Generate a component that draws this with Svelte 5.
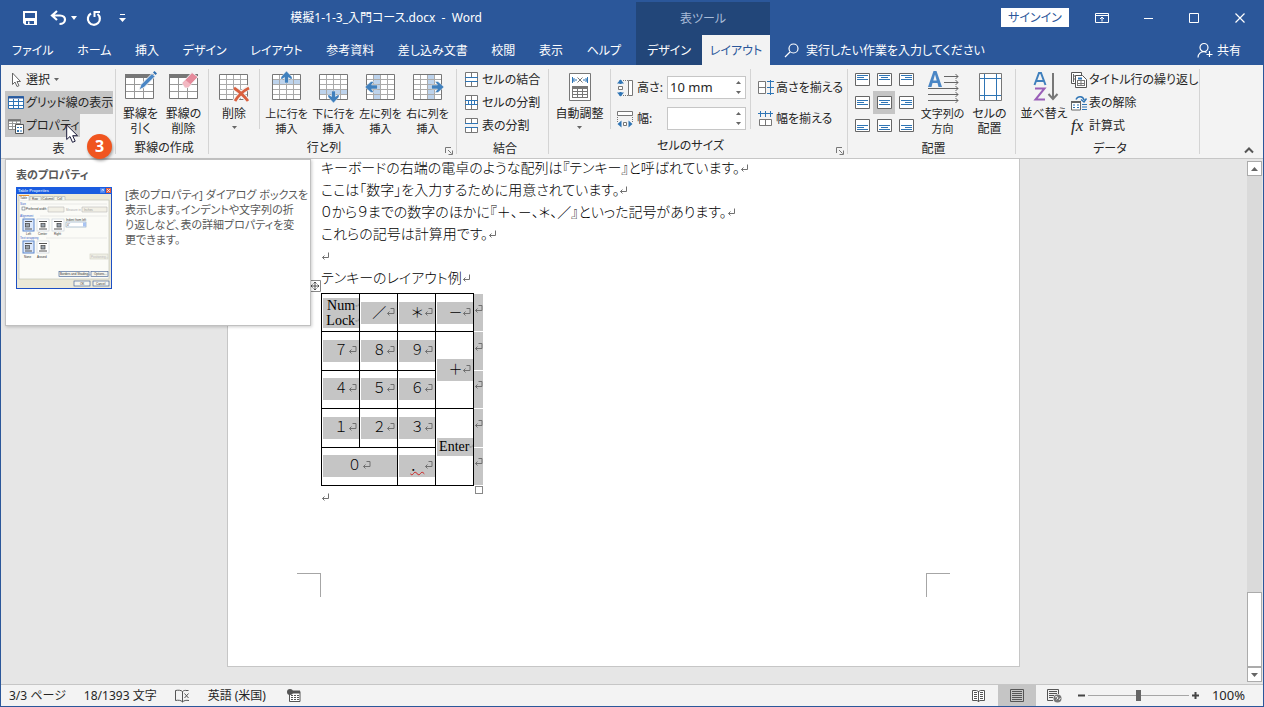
<script>
  const tabs = ['ファイル', 'ホーム', '挿入', 'デザイン', 'レイアウト', '参考資料', '差し込み文書', '校閲', '表示', 'ヘルプ'];
  const inserts = [
    { label: ['上に行を', '挿入'], dir: 'up' },
    { label: ['下に行を', '挿入'], dir: 'down' },
    { label: ['左に列を', '挿入'], dir: 'left' },
    { label: ['右に列を', '挿入'], dir: 'right' }
  ];
  const lines = [
    'キーボードの右端の電卓のような配列は『テンキー』と呼ばれています。',
    'ここは「数字」を入力するために用意されています。',
    '０から９までの数字のほかに『＋、－、＊、／』といった記号があります。',
    'これらの記号は計算用です。',
    '',
    'テンキーのレイアウト例'
  ];
  const aligns = ['左上', '中央上', '右上', '左中央', '中央', '右中央', '左下', '中央下', '右下'];
  const rows = [
    [{ t: ['Num', 'Lock'], latin: true }, { t: ['／'] }, { t: ['＊'] }, { t: ['－'] }],
    [{ t: ['７'] }, { t: ['８'] }, { t: ['９'] }, { t: ['＋'], rs: 2 }],
    [{ t: ['４'] }, { t: ['５'] }, { t: ['６'] }],
    [{ t: ['１'] }, { t: ['２'] }, { t: ['３'] }, { t: ['Enter'], rs: 2, latin: true }],
    [{ t: ['０'], cs: 2 }, { t: ['．'], err: true }]
  ];
  let rowHeight = $state('10 mm');
  let colWidth = $state('');
  let zoom = $state(50);
</script>

{#snippet mark()}
  <svg class="mark" width="9" height="9" viewBox="0 0 9 9" aria-hidden="true"><path d="M7.500 .5V5.500H1.500M3.500 3.500L1.500 5.500L3.500 7.500" /></svg>
{/snippet}

{#snippet cellmark()}
  <svg class="mark" width="9" height="9" viewBox="0 0 9 9" aria-hidden="true"><path d="M4.500 .5H8V5.500H1.500M3.500 3.500L1.500 5.500L3.500 7.500" /></svg>
{/snippet}

{#snippet launcher(name)}
  <button class="launcher" aria-label={name}>
    <svg width="8" height="8" viewBox="0 0 8 8"><path d="M.5 6V.5H6M3 3l3.500 3.500M7.500 3.500v4h-4" fill="none" stroke="#777" /></svg>
  </button>
{/snippet}

{#snippet down()}
  <svg class="down" width="5" height="3" viewBox="0 0 5 3"><path d="M0 0H5L2.500 3Z" fill="#666" /></svg>
{/snippet}

{#snippet grid28()}
  <path d="M1.500 4.500H29.500V29.500H1.500Z" fill="#fff" stroke="#777" />
{/snippet}

{#snippet gridlines()}
  <path d="M8.500 5V29M15.500 5V29M22.500 5V29M2 9.500H29M2 14.500H29M2 19.500H29M2 24.500H29" fill="none" stroke="#aaa" />
{/snippet}

<div class="window">
  <header>
    <div class="titlebar">
      <div class="quick">
        <button aria-label="上書き保存">
          <svg width="16" height="16" viewBox="0 0 16 16"><path d="M1 1H15V15H3L1 13ZM3 3V8H13V3ZM4 11V14H6V11.500H7.500V14H12V11Z" fill="#fff" fill-rule="evenodd" /></svg>
        </button>
        <button class="undo" aria-label="元に戻す">
          <svg width="17" height="16" viewBox="0 0 17 16"><path d="M7 1L2 5.500L7 10M2.500 5.500H10C17 5.500 16.500 14 9.500 14" fill="none" stroke="#fff" stroke-width="2.200" /></svg>
          <svg width="6" height="4" viewBox="0 0 6 4"><path d="M0 0H6L3 4Z" fill="#fff" /></svg>
        </button>
        <button aria-label="繰り返し">
          <svg width="16" height="16" viewBox="0 0 16 16"><path d="M5 3.500A6 6 0 1 0 11.500 4" fill="none" stroke="#fff" stroke-width="2.200" /><path d="M8.500 7V2H14" fill="none" stroke="#fff" stroke-width="2" /></svg>
        </button>
        <button aria-label="クイック アクセス ツール バーのユーザー設定">
          <svg width="7" height="8" viewBox="0 0 7 8"><path d="M1 0H6V1H1ZM0 4H7L3.500 8Z" fill="#fff" /></svg>
        </button>
      </div>
      <h1>模擬1-1-3_入門コース.docx&nbsp; -&nbsp; Word</h1>
    </div>
    <div class="context">表ツール</div>
    <div class="controls">
      <button class="signin">サインイン</button>
      <button class="win" aria-label="リボンの表示オプション"><svg width="14" height="12" viewBox="0 0 14 12"><path d="M.5 1.500H13.500V10.500H.5ZM.5 3.500H13.500M7 9.500V5M5 7L7 5L9 7" fill="none" stroke="#fff" /></svg></button>
      <button class="win" aria-label="最小化"><svg width="10" height="10" viewBox="0 0 10 10"><path d="M1 5.500H10" stroke="#fff" /></svg></button>
      <button class="win" aria-label="最大化"><svg width="10" height="10" viewBox="0 0 10 10"><path d="M.5 .5H9.500V9.500H.5Z" fill="none" stroke="#fff" /></svg></button>
      <button class="win" aria-label="閉じる"><svg width="10" height="10" viewBox="0 0 10 10"><path d="M.5 .5L9.500 9.500M9.500 .5L.5 9.500" stroke="#fff" stroke-width="1.200" /></svg></button>
    </div>
    <nav class="tabs">
      {#each tabs as tab}<button>{tab}</button>{/each}
    </nav>
    <nav class="tabs ctx">
      <button>デザイン</button>
      <button class="active">レイアウト</button>
    </nav>
    <div class="tell">
      <label for="tell" aria-label="操作アシスト"><svg width="15" height="15" viewBox="0 0 15 15"><path d="M6 9L1 14M9.500 1A4.500 4.500 0 1 1 9.500 10A4.500 4.500 0 1 1 9.500 1Z" fill="none" stroke="#fff" stroke-width="1.200" /></svg></label>
      <input id="tell" type="text" placeholder="実行したい作業を入力してください" />
      <button class="share"><svg width="16" height="16" viewBox="0 0 16 16"><path d="M7 1.500A4 4 0 1 1 7 9.500A4 4 0 1 1 7 1.500ZM1 15.500C1 11.500 4 9.700 7 9.700C8 9.700 9 10 9.500 10.500M12.500 9V15M9.500 12.500H15.500" fill="none" stroke="#fff" stroke-width="1.200" /></svg>共有</button>
    </div>
  </header>

  <section class="ribbon">
    <div class="group g1">
      <div class="body">
        <div class="stack">
          <button class="small"><svg width="16" height="16" viewBox="0 0 16 16"><path d="M4.500 1V12.500L7 10L9 14.500L11 13.700L9 9.500H12.500Z" fill="#fff" stroke="#666" /></svg>選択{@render down()}</button>
          <button class="small on"><svg width="16" height="16" viewBox="0 0 16 16"><path d="M.5 1.500H15.500V13.500H.5Z" fill="#fff" stroke="#2f6fb0" /><path d="M0 2.500H16" stroke="#2b579a" stroke-width="2" /><path d="M5.500 4V13M10.500 4V13M1 6.500H15M1 10.500H15" stroke="#2f75b5" /></svg>グリッド線の表示</button>
          <button class="small on"><svg width="16" height="16" viewBox="0 0 16 16"><path d="M.5 1.500H12.500V11.500H.5Z" fill="#fff" stroke="#888" /><path d="M0 2.500H13" stroke="#777" stroke-width="2" /><path d="M4.500 3V11M8.500 3V11M1 5.500H12M1 8.500H12" stroke="#999" /><path d="M7.500 6.500H15.500V15.500H7.500Z" fill="#fff" stroke="#555" /><path d="M9 9H11V10H9ZM12 9H14V10H12ZM9 12H11V14H9ZM12 12.500H14V13.500H12Z" fill="#2f75b5" /></svg>プロパティ</button>
        </div>
      </div>
      <div class="caption">表</div>
      <svg class="cursor" width="13" height="19" viewBox="0 0 13 19"><path d="M.7 1V15.500L4 12.500L6.500 18.300L9.200 17.200L6.700 11.700H11.500Z" fill="#fff" stroke="#1b1b3a" /></svg>
      <div class="badge">3</div>
      <div class="tip" role="tooltip">
        <h2>表のプロパティ</h2>
        <div class="tiprow">
          <svg width="96" height="102" viewBox="0 0 96 102" font-family="Liberation Sans, sans-serif" font-size="3" fill="#333">
            <rect width="96" height="102" fill="#1d4fc4" />
            <rect y="0" width="96" height="7" fill="#1a5ce0" />
            <text x="2" y="5" font-size="4" font-weight="bold" fill="#cfe0ff">Table Properties</text>
            <rect x="84" y="1" width="5" height="5" fill="#4a84f0" /><path d="M86 4.500V2.500H87.500V4" stroke="#fff" stroke-width=".6" fill="none" />
            <rect x="90" y="1" width="5" height="5" fill="#e0603f" /><path d="M91 2L94 5M94 2L91 5" stroke="#fff" stroke-width=".7" />
            <rect x="1" y="7" width="94" height="94" fill="#ece9d8" />
            <rect x="3" y="13" width="90" height="79" fill="#fbfbf7" stroke="#b9bcae" stroke-width=".6" />
            <path d="M14 13V9.500H25V13M26 13V9.500H37V13M38 13V9.500H49V13" fill="#f5f4ea" stroke="#a9b0b5" stroke-width=".6" />
            <path d="M3 13.500V8.500H13V13.500" fill="#fff" stroke="#a9b0b5" stroke-width=".6" /><path d="M3 8.500H13" stroke="#e8932f" />
            <text x="4" y="12">Table</text><text x="16" y="12.500">Row</text><text x="26.500" y="12.500">Column</text><text x="41" y="12.500">Cell</text>
            <g fill="#3c66c8"><text x="4" y="18">Size</text><text x="4" y="30">Alignment</text><text x="4" y="52">Text wrapping</text></g>
            <path d="M14 17H91M24 29H91M30 51H91" stroke="#ddd" stroke-width=".6" />
            <rect x="6" y="20" width="3" height="3" fill="#fff" stroke="#456" stroke-width=".5" /><text x="10" y="23">Preferred width</text>
            <path d="M32 20H48V25H32ZM66 20H91V25H66Z" fill="#f2f0e6" stroke="#bbb" stroke-width=".6" /><text x="50" y="23.500" fill="#aaa">Measure in</text><text x="68" y="23.500" fill="#999">Inches</text>
            <g fill="#fff" stroke="#c3ccd6" stroke-width=".6"><rect x="21" y="32" width="12" height="12" /><rect x="36" y="32" width="12" height="12" /><rect x="21" y="54" width="12" height="12" /></g>
            <g fill="#dce8fb" stroke="#5b86cc"><rect x="7" y="32" width="11" height="12" /><rect x="7" y="54" width="11" height="12" /></g>
            <path d="M9 34.500H16M9 42H16M23 34.500H31M23 42H31M38 34.500H46M38 42H46M9 56.500H16M9 64H16M23 56.500H31M23 64H31" stroke="#555" />
            <g fill="#9aa3ad" stroke="#444" stroke-width=".7"><rect x="9.500" y="36.500" width="4" height="3.500" /><rect x="25" y="36.500" width="4" height="3.500" /><rect x="41" y="36.500" width="4" height="3.500" /><rect x="9.500" y="58.500" width="4" height="3.500" /><rect x="25" y="58.500" width="4" height="3.500" /></g>
            <text x="10" y="48">Left</text><text x="22" y="48">Center</text><text x="38" y="48">Right</text><text x="8" y="71">None</text><text x="21" y="71">Around</text>
            <text x="50" y="34">Indent from left</text><rect x="50" y="35" width="20" height="5" fill="#fff" stroke="#7f9db9" stroke-width=".6" /><rect x="67" y="35.500" width="3" height="4" fill="#a9c4f2" /><text x="51" y="39">0"</text>
            <rect x="74" y="67" width="18" height="5" fill="#f0efe5" stroke="#d0cfc4" stroke-width=".6" /><text x="75" y="70.500" fill="#bbb">Positioning...</text>
            <g fill="#f6f5ee" stroke="#35568f" stroke-width=".6"><rect x="43" y="84.500" width="30" height="5" /><rect x="75" y="84.500" width="17" height="5" /><rect x="58" y="94" width="16" height="5" /><rect x="77" y="94" width="16" height="5" /></g>
            <text x="44" y="88">Borders and Shading...</text><text x="78" y="88">Options...</text><text x="64" y="97.500">OK</text><text x="80" y="97.500">Cancel</text>
          </svg>
          <p>[表のプロパティ] ダイアログ ボックスを<br />表示します。インデントや文字列の折<br />り返しなど、表の詳細プロパティを変<br />更できます。</p>
        </div>
      </div>
    </div>

    <div class="group g2">
      <div class="body">
        <button class="big">
          <svg width="32" height="32" viewBox="0 0 32 32"><path d="M.5 4.500H28.500V28.500H.5Z" fill="#fff" stroke="#777" /><path d="M0 6H29" stroke="#777" stroke-width="4" /><path d="M9.500 8V28M18.500 8V28M1 14.500H28M1 21.500H28" stroke="#999" /><path d="M14 20L16 14.500L27 3.500L30 6.500L19 17.500Z" fill="#4a86c5" stroke="#f3f3f3" /><path d="M28 2.500L29.500 1L32 3.500L30.500 5Z" fill="#2f6fb0" /></svg>
          <span>罫線を<br />引く</span>
        </button>
        <button class="big">
          <svg width="32" height="32" viewBox="0 0 32 32"><path d="M1.500 4.500H29.500V28.500H1.500Z" fill="#fff" stroke="#777" /><path d="M1 6H30" stroke="#777" stroke-width="4" /><path d="M10.500 8V28M19.500 8V28M2 14.500H29M2 21.500H29" stroke="#999" /><path d="M14 13L24 2.500L30 7L20 17.500H17Z" fill="#e58a9b" stroke="#f3f3f3" /><path d="M14.500 13L17.500 10L23 14.500L20 17.500H17Z" fill="#f3b8c2" /></svg>
          <span>罫線の<br />削除</span>
        </button>
      </div>
      <div class="caption">罫線の作成</div>
    </div>

    <div class="group g3">
      <div class="body">
        <button class="big del">
          <svg width="32" height="32" viewBox="0 0 32 32">{@render grid28()}{@render gridlines()}<path d="M16 18C22 22 27 27 31 32M31 17C25 21 20 27 16 32" stroke="#f3f3f3" stroke-width="5" fill="none" /><path d="M16 18C22 22 27 27 30 31M31 18C25 21 20 26 17 31" stroke="#d9603f" stroke-width="2.800" fill="none" /></svg>
          <span>削除</span>{@render down()}
        </button>
        <i class="rule"></i>
        {#each inserts as item}
          <button class="big ins">
            <svg width="32" height="32" viewBox="0 0 32 32">
              {@render grid28()}
              {#if item.dir === 'up'}<path d="M2 10H29V14H2Z" fill="#bdd3ec" />
              {:else if item.dir === 'down'}<path d="M2 20H29V24H2Z" fill="#bdd3ec" />
              {:else if item.dir === 'left'}<path d="M9 5H15V29H9Z" fill="#bdd3ec" />
              {:else}<path d="M16 5H22V29H16Z" fill="#bdd3ec" />{/if}
              {@render gridlines()}
              {#if item.dir === 'up'}<path d="M15.500 1L21 7V10L17.500 7.500V13H13.500V7.500L10 10V7Z" fill="#4080bd" stroke="#f3f3f3" stroke-width=".5" />
              {:else if item.dir === 'down'}<path d="M15.500 33L21 27V24L17.500 26.500V21H13.500V26.500L10 24V27Z" fill="#4080bd" stroke="#f3f3f3" stroke-width=".5" />
              {:else if item.dir === 'left'}<path d="M0 17L6 11.500H9L6.500 15H12.500V19H6.500L9 22.500H6Z" fill="#4080bd" stroke="#f3f3f3" stroke-width=".5" />
              {:else}<path d="M32 17L26 11.500H23L25.500 15H19.500V19H25.500L23 22.500H26Z" fill="#4080bd" stroke="#f3f3f3" stroke-width=".5" />{/if}
            </svg>
            <span>{item.label[0]}<br />{item.label[1]}</span>
          </button>
        {/each}
      </div>
      <div class="caption">行と列</div>
      {@render launcher('表の挿入オプション')}
    </div>

    <div class="group g4">
      <div class="body">
        <div class="stack">
          <button class="small"><svg width="16" height="16" viewBox="0 0 16 16"><path d="M1.500 .5H13.500V14.500H1.500ZM7.500 .5V5M7.500 10V14" fill="#fff" stroke="#777" /><path d="M1 5.500H14M1 9.500H14" stroke="#2f75b5" /></svg>セルの結合</button>
          <button class="small"><svg width="16" height="16" viewBox="0 0 16 16"><path d="M1.500 .5H13.500V14.500H1.500ZM7.500 .5V5M7.500 10V14" fill="#fff" stroke="#777" /><path d="M1 5.500H14M1 9.500H14M4.500 5V10M7.500 5V10M10.500 5V10" stroke="#2f75b5" /></svg>セルの分割</button>
          <button class="small"><svg width="16" height="16" viewBox="0 0 16 16"><path d="M1.500 5V.5H13.500V5M1.500 10V14.500H13.500V10M7.500 .5V5M7.500 10V14" fill="#fff" stroke="#777" /><path d="M1 5.500H14M1 9.500H14" stroke="#2f75b5" /></svg>表の分割</button>
        </div>
      </div>
      <div class="caption">結合</div>
    </div>

    <div class="group g5">
      <div class="body">
        <button class="big auto">
          <svg width="32" height="32" viewBox="0 0 32 32"><path d="M5.500 3.500H26.500V30.500H5.500Z" fill="#fff" stroke="#777" /><path d="M8.500 7V13M23.500 7V13M9 10H13M10.500 8L8.500 10L10.500 12M23 10H19M21.500 8L23.500 10L21.500 12" stroke="#2f75b5" fill="none" /><path d="M13.500 7.500L18.500 12.500M18.500 7.500L13.500 12.500" stroke="#777" /><path d="M8 16H24V28H8Z" fill="#777" /><path d="M9 19H13V21H9ZM14 19H18V21H14ZM19 19H23V21H19ZM9 22H13V24H9ZM14 22H18V24H14ZM19 22H23V24H19ZM9 25H13V27H9ZM14 25H18V27H14ZM19 25H23V27H19Z" fill="#fff" /></svg>
          <span>自動調整</span>{@render down()}
        </button>
        <i class="rule"></i>
        <div class="fields">
          <label for="rh"><svg width="17" height="18" viewBox="0 0 17 18"><path d="M11.500 1.500H15.500V16.500H11.500Z" fill="#fff" stroke="#777" /><path d="M6 1.500H11M6 16.500H11" stroke="#777" stroke-dasharray="1 1" /><path d="M3.500 1V5M3.500 17V13" stroke="#2f75b5" stroke-width="2" /><path d="M0 4.500L3.500 .5L7 4.500ZM0 13.500L3.500 17.500L7 13.500Z" fill="#2f75b5" /><path d="M1.500 7.500H5.500V10.500H1.500Z" fill="#fff" stroke="#777" /></svg>高さ:</label>
          <div class="spin"><input id="rh" type="text" bind:value={rowHeight} /><span><button aria-label="高さを増やす"><svg width="5" height="3" viewBox="0 0 5 3"><path d="M0 3H5L2.500 0Z" fill="#666" /></svg></button><button aria-label="高さを減らす">{@render down()}</button></span></div>
          <label for="cw"><svg width="17" height="18" viewBox="0 0 17 18"><path d="M.5 1.500H15.500V5.500H.5Z" fill="#fff" stroke="#777" /><path d="M.5 7V12M15.500 7V12" stroke="#777" stroke-dasharray="1 1" /><path d="M4.500 10.500L.5 14L4.500 17.500ZM11.500 10.500L15.500 14L11.500 17.500Z" fill="#2f75b5" /><path d="M6.500 12.500H9.500V15.500H6.500Z" fill="#fff" stroke="#777" /></svg>幅:</label>
          <div class="spin"><input id="cw" type="text" bind:value={colWidth} /><span><button aria-label="幅を増やす"><svg width="5" height="3" viewBox="0 0 5 3"><path d="M0 3H5L2.500 0Z" fill="#666" /></svg></button><button aria-label="幅を減らす">{@render down()}</button></span></div>
        </div>
        <i class="rule"></i>
        <div class="even">
          <button class="small"><svg width="16" height="16" viewBox="0 0 16 16"><path d="M.5 1.500H7.500V13.500H.5ZM.5 7.500H7.500" fill="#fff" stroke="#777" /><path d="M12.500 0V15M9 1.500H16M9 7.500H16M9 13.500H16" stroke="#2f75b5" /></svg>高さを揃える</button>
          <button class="small"><svg width="16" height="16" viewBox="0 0 16 16"><path d="M1.500 8.500H13.500V14.500H1.500ZM7.500 8.500V14" fill="#fff" stroke="#777" /><path d="M0 2.500H15M2.500 0V6M7.500 0V6M12.500 0V6" stroke="#2f75b5" /></svg>幅を揃える</button>
        </div>
      </div>
      <div class="caption">セルのサイズ</div>
      {@render launcher('セルのサイズの設定')}
    </div>

    <div class="group g6">
      <div class="body">
        <div class="aligns">
          {#each aligns as name, i}
            {@const y = [2.5, 4.5, 6.5][Math.floor(i / 3)]}
            {@const s = [2, 4, 6][i % 3]}
            {@const e = [9, 11, 13][i % 3]}
            <button aria-label={name} class:on={i === 4}>
              <svg width="15" height="13" viewBox="0 0 15 13"><path d="M.5 .5H14.500V12.500H.5Z" fill="#fff" stroke="#666" /><path d="M2 {y}H13M{s} {y + 2}H{e}M2 {y + 4}H13" stroke="#2f75b5" /></svg>
            </button>
          {/each}
        </div>
        <button class="big ins dir">
          <svg width="32" height="32" viewBox="0 0 32 32"><path d="M1 17L6.500 1H9.500L15 17H11.500L10.500 13H5.500L4.500 17ZM6.300 10.500H9.700L8 4.500Z" fill="#4a86c5" fill-rule="evenodd" /><path d="M17 6.500H31M17 12.500H31M1 18.500H31M1 24.500H31M1 30.500H31M28.500 4L31 6.500L28.500 9M28.500 10L31 12.500L28.500 15M28.500 16L31 18.500L28.500 21M28.500 22L31 24.500L28.500 27M28.500 28L31 30.500L28.500 33" fill="none" stroke="#666" /></svg>
          <span>文字列の<br />方向</span>
        </button>
        <button class="big">
          <svg width="32" height="32" viewBox="0 0 32 32"><path d="M5.500 3.500H27.500V30.500H5.500Z" fill="#fff" stroke="#777" /><path d="M10.500 4V30M22.500 4V30M6 8.500H27M6 25.500H27" stroke="#2f75b5" /></svg>
          <span>セルの<br />配置</span>
        </button>
      </div>
      <div class="caption">配置</div>
    </div>

    <div class="group g7">
      <div class="body">
        <button class="big sort">
          <svg width="32" height="32" viewBox="0 0 32 32"><path d="M6.500 15L11 3H13L17.500 15M8.500 11H15.500" fill="none" stroke="#4080bd" stroke-width="2" /><path d="M7 18.500H16.500L7.500 29.500H17" fill="none" stroke="#9a5fb8" stroke-width="2" /><path d="M25 3V29M20.500 24L25 29L29.500 24" fill="none" stroke="#777" stroke-width="2" /></svg>
          <span>並べ替え</span>
        </button>
        <div class="stack">
          <button class="small"><svg width="16" height="16" viewBox="0 0 16 16"><path d="M.5 .5H10.500V11.500H.5Z" fill="#fff" stroke="#555" /><path d="M2 4H5M2 7H5M2.500 2V10" stroke="#666" /><path d="M4.500 3.500H11.500L15.500 7.500V15.500H4.500Z" fill="#fff" stroke="#555" /><path d="M6 8H14V14H6Z" fill="#777" /><path d="M7 6.500H11" stroke="#2f75b5" stroke-width="2" /><path d="M7 9H9.500V11H7ZM10.500 9H13V11H10.500ZM7 12H9.500V13H7ZM10.500 12H13V13H10.500Z" fill="#fff" /></svg>タイトル行の繰り返し</button>
          <button class="small"><svg width="16" height="16" viewBox="0 0 16 16"><path d="M.5 6.500H9.500V15H.5Z" fill="#fff" stroke="#666" /><path d="M0 7H10" stroke="#666" stroke-width="2" /><path d="M2 10H4M6 10H8M2 12.500H4M6 12.500H8M11 9.500H16M11 12H16M11 14.500H16" stroke="#2f75b5" /><path d="M5 4.500C7 .5 12 1 13 5M10 4.500L13 7L15.500 3.500" fill="none" stroke="#2f75b5" stroke-width="1.500" /></svg>表の解除</button>
          <button class="small"><em>fx</em>計算式</button>
        </div>
      </div>
      <div class="caption">データ</div>
    </div>
    <button class="collapse" aria-label="リボンを折りたたむ"><svg width="10" height="7" viewBox="0 0 10 7"><path d="M1 5.500L5 1.500L9 5.500" fill="none" stroke="#555" stroke-width="2" /></svg></button>
  </section>

  <main>
    <div class="canvas">
      <article>
        {#each lines as line}<p>{line}{@render mark()}</p>{/each}
        <div class="tablewrap">
          <svg class="move" width="12" height="12" viewBox="0 0 12 12"><path d="M.5 .5H11.500V11.500H.5Z" fill="#fff" stroke="#888" /><path d="M6 2V10M2 6H10M4.500 3.500L6 2L7.500 3.500M4.500 8.500L6 10L7.500 8.500M3.500 4.500L2 6L3.500 7.500M8.500 4.500L10 6L8.500 7.500" fill="none" stroke="#333" stroke-width=".8" /></svg>
          <table>
            <tbody>
              {#each rows as row}
                <tr>
                  {#each row as c}
                    <td rowspan={c.rs ?? 1} colspan={c.cs ?? 1}>
                      <div class="sel" class:latin={c.latin} class:two={c.t.length > 1}>
                        {#each c.t as t, i}<span class:err={c.err}>{t}</span>{#if c.latin}{@render mark()}{:else}{@render cellmark()}{/if}{#if i < c.t.length - 1}<br />{/if}{/each}
                      </div>
                    </td>
                  {/each}
                  <td class="end">{@render cellmark()}</td>
                </tr>
              {/each}
            </tbody>
          </table>
          <i class="resize"></i>
        </div>
        <p>{@render mark()}</p>
        <div class="corners"><i></i><i></i></div>
      </article>
    </div>
    <div class="scroll">
      <button aria-label="上へスクロール"><svg width="7" height="4" viewBox="0 0 7 4"><path d="M0 4H7L3.500 0Z" fill="#666" /></svg></button>
      <div class="track"><div class="thumb"></div></div>
      <button aria-label="下へスクロール"><svg width="7" height="4" viewBox="0 0 7 4"><path d="M0 0H7L3.500 4Z" fill="#666" /></svg></button>
    </div>
  </main>

  <footer>
    <button>3/3 ページ</button>
    <button>18/1393 文字</button>
    <button aria-label="スペル チェック"><svg width="15" height="14" viewBox="0 0 15 14"><path d="M7.500 2.500C6 1 3 1 .5 1.500V11.500C3 11 6 11 7.500 13C9 11.500 11 11 14 11.500M7.500 2.500V13M7.500 2.500C8.500 1.500 10 1.200 11.500 1.500M9.500 4.500L13.500 9M13.500 4.500L9.500 9M11 1.500H13.500" fill="none" stroke="#555" /></svg></button>
    <button>英語 (米国)</button>
    <button class="macro" aria-label="マクロの記録"><svg width="14" height="14" viewBox="0 0 14 14"><path d="M2.500 2.500H13V12.500H2.500Z" fill="#fff" stroke="#555" /><path d="M4 3H13" stroke="#555" stroke-width="3" /><path d="M4 6.500H6M7 6.500H9M10 6.500H12M4 8.500H6M7 8.500H9M10 8.500H12M4 10.500H6M7 10.500H9M10 10.500H12" stroke="#555" /><circle cx="3" cy="3" r="3" fill="#555" /></svg></button>
    <div class="right">
      <button class="view" aria-label="閲覧モード"><svg width="14" height="13" viewBox="0 0 14 13"><path d="M6.500 2.500L4.500 1.500H.5V11.500H5L6.500 12.500L8 11.500H12.500V1.500H8.500ZM6.500 2V13M2 3.500H5M2 5.500H5M2 7.500H5M2 9.500H5M8 3.500H11M8 5.500H11M8 7.500H11M8 9.500H11" fill="#fff" stroke="#555" /></svg></button>
      <button class="view active" aria-label="印刷レイアウト"><svg width="14" height="13" viewBox="0 0 14 13"><path d="M.5 .5H13.500V12.500H.5ZM2 2.500H12M2 4.500H12M2 6.500H12M2 8.500H12M2 10.500H12" fill="none" stroke="#555" /></svg></button>
      <button class="view" aria-label="Web レイアウト"><svg width="15" height="14" viewBox="0 0 15 14"><path d="M6 11.500H.5V.5H11.500V5M2 2.500H10M2 4.500H10M2 6.500H7M2 8.500H6" fill="none" stroke="#555" /><circle cx="10.500" cy="9.500" r="4" fill="#777" /><path d="M8 8L10 7.500L11 9L9.500 10.500M12 11L13.500 9" stroke="#f3f3f3" fill="none" /></svg></button>
      <div class="zoom">
        <button aria-label="縮小"><svg width="7" height="7" viewBox="0 0 7 7"><path d="M0 3.500H7" stroke="#444" stroke-width="2" /></svg></button>
        <input type="range" min="0" max="100" bind:value={zoom} aria-label="ズーム" />
        <button aria-label="拡大"><svg width="7" height="7" viewBox="0 0 7 7"><path d="M0 3.500H7M3.500 0V7" stroke="#444" stroke-width="2" /></svg></button>
      </div>
      <button class="pct">100%</button>
    </div>
  </footer>
</div>

<style>
  :global(body) { margin: 0; }
  .window, .window * { box-sizing: border-box; }
  .window {
    display: flex; flex-direction: column; height: 100vh; min-height: 600px; overflow: hidden;
    border: solid #2b579a; border-width: 0 1px 1px;
    background: #e6e6e6; color: #262626;
    font: 12px/15px "Noto Sans", "Noto Sans CJK JP", sans-serif;
    font-feature-settings: "palt";
  }
  button, input { font: inherit; font-feature-settings: inherit; color: inherit; background: none; border: 0; padding: 0; margin: 0; white-space: nowrap; }
  svg { display: block; flex: none; overflow: visible; }
  h1, h2, p { margin: 0; font: inherit; }

  header { display: grid; grid-template-columns: 635px 134px 1fr; grid-template-rows: 35px 30px; background: #2b579a; color: #fff; flex: none; }
  .titlebar { display: flex; align-items: center; justify-content: space-between; padding: 0 154px 0 21px; }
  .quick { display: flex; align-items: center; gap: 17px; }
  .quick button { display: flex; }
  .quick .undo { gap: 4px; align-items: center; margin: 0 -8px 0 -5px; }
  .context { margin-top: 2px; background: #224679; color: #a9bcd8; display: flex; align-items: center; justify-content: center; }
  .controls { display: flex; justify-content: flex-end; align-items: center; }
  .signin { background: #fff; color: #2b579a; width: 68px; height: 19px; margin-right: 10px; }
  .win { width: 46px; height: 33px; display: grid; place-items: center; }
  .tabs { display: flex; justify-content: space-between; padding: 0 4px 0 0; }
  .tabs button { padding: 0 11px; }
  .ctx { background: #224679; padding: 0; }
  .ctx .active { flex: 1; background: #f3f3f3; color: #2b579a; padding: 0; }
  .tell { display: flex; align-items: center; padding: 0 22px 0 14px; gap: 7px; }
  .tell input { flex: 1; outline: 0; }
  .tell input::placeholder { color: #fff; opacity: 1; }
  .share { display: flex; align-items: center; gap: 4px; }

  .ribbon { position: relative; z-index: 2; flex: none; display: flex; height: 94px; background: #f3f3f3; border-bottom: 1px solid #c6c6c6; }
  .group { position: relative; display: flex; flex-direction: column; padding-top: 3px; flex: none; }
  .group::after { content: ""; position: absolute; right: 0; top: 4px; bottom: 4px; width: 1px; background: #d4d4d4; }
  .g1 { width: 115px; padding-left: 4px; }
  .g2 { width: 93px; padding-left: 3px; }
  .g3 { width: 248px; }
  .g4 { width: 92px; padding-left: 4px; }
  .g5 { width: 299px; }
  .g6 { width: 168px; padding-left: 3px; }
  .g7 { width: 184px; padding-left: 4px; }
  .body { display: flex; height: 69px; }
  .caption { text-align: center; line-height: 24px; }
  .g1 .caption { padding-right: 4px; }
  .g3 .caption { padding-right: 18px; }
  .g5 .caption { padding-right: 16px; }
  .stack { display: flex; flex-direction: column; align-items: flex-start; }
  .small { display: flex; align-items: center; height: 23px; gap: 2px; padding: 0 0 0 3px; }
  .small .down { margin-left: 2px; }
  .small em { width: 16px; font: italic 17px/20px "Liberation Serif", serif; text-align: left; }
  .on { background: #c5c5c5; }
  .big { width: 43px; display: flex; flex-direction: column; align-items: center; padding-top: 2px; }
  .big span { margin-top: 4px; }
  .big .down { margin-top: 5px; }
  .del { width: 50px; }
  .ins { width: 47px; font-size: 11px; }
  .dir { width: 51px; }
  .auto { width: 61px; }
  .sort { width: 48px; }
  .rule { width: 1px; height: 60px; margin-top: 1px; background: #d4d4d4; }
  .del + .rule { margin-right: 3px; }
  .fields { display: grid; grid-template-columns: 50px 79px; grid-auto-rows: 23px; row-gap: 8px; padding: 8px 4px 0 6px; }
  .fields label { display: flex; align-items: center; gap: 3px; }
  .spin { display: flex; background: #fff; border: 1px solid #c6c6c6; }
  .spin input { flex: 1; min-width: 0; padding-left: 2px; font-size: 13px; outline: 0; }
  .spin span { width: 14px; display: grid; grid-template-rows: 1fr 1fr; }
  .spin button { display: grid; place-items: center; }
  .even { display: flex; flex-direction: column; gap: 8px; padding: 8px 0 0 4px; }
  .launcher { position: absolute; right: 4px; bottom: 3px; }
  .aligns { display: grid; grid-template: repeat(3, 23px) / repeat(3, 22px); }
  .aligns button { display: grid; place-items: center; }
  .collapse { margin: auto 9px 4px auto; }

  .cursor { position: absolute; left: 65px; top: 59px; z-index: 3; }
  .badge { position: absolute; left: 86px; top: 69px; width: 25px; height: 25px; border-radius: 50%; background: #f0551f; color: #fff; font: bold 16px/25px "Noto Sans", sans-serif; text-align: center; box-shadow: 1px 2px 3px #0005; z-index: 3; }
  .tip { position: absolute; left: 4px; top: 94px; width: 306px; height: 167px; padding: 7px 0 0 10px; background: #fff; border: 1px solid #c0c0c0; box-shadow: 1px 1px 3px #0003; color: #595959; }
  .tip h2 { font-weight: bold; line-height: 15px; margin-bottom: 5px; font-size: 11px; }
  .tiprow { display: flex; gap: 13px; font-size: 11px; white-space: nowrap; }

  main { flex: 1; min-height: 0; display: flex; }
  .canvas { flex: 1; overflow: hidden; display: flex; justify-content: center; padding-bottom: 17px; }
  article { width: 793px; flex: none; margin-top: -2px; padding: 0 93px; background: #fff; border: 1px solid #c6c6c6; border-top: 0; display: flex; flex-direction: column; color: #000; font-size: 14px; font-weight: 300; }
  article p { height: 22px; line-height: 22px; display: flex; align-items: center; }
  .mark { display: inline-block; flex: none; fill: none; stroke: #707070; stroke-width: 1; }
  .tablewrap { position: relative; width: 162px; margin-top: 4px; }
  table { border-collapse: collapse; table-layout: fixed; width: 162px; height: 193px; }
  td { border: 1px solid #000; padding: 0 0 0 1px; width: 38px; height: 38px; vertical-align: middle; }
  td.end { width: 9px; padding: 0 0 9px; background: #c5c5c5; border-color: #fff; border-width: 1px 0; border-left: 1px solid #000; }
  .sel { background: #c5c5c5; height: 22px; line-height: 19px; text-align: right; padding-right: 2px; white-space: nowrap; font-size: 14px; font-feature-settings: normal; overflow: hidden; }
  td[colspan="2"] .sel { text-align: center; }
  .sel.latin { height: 18px; padding: 0; font: 400 14px/18px "Liberation Serif", serif; }
  .sel.two { height: 30px; line-height: 15px; }
  .latin .mark { width: 4px; }
  .err { text-decoration: underline wavy #c22 1px; }
  .move { position: absolute; left: -12px; top: -13px; }
  .resize { position: absolute; right: 0; bottom: -8px; width: 8px; height: 8px; border: 1px solid #888; background: #fff; }
  .corners { margin: auto -24px 0; height: 93px; display: flex; justify-content: space-between; }
  .corners i { width: 24px; height: 24px; border: solid #a6a6a6; border-width: 1px 1px 0 0; }
  .corners i + i { border-width: 1px 0 0 1px; }

  .scroll { width: 17px; display: flex; flex-direction: column; padding: 2px 1px; }
  .scroll button { height: 15px; background: #fff; border: 1px solid #ababab; display: grid; place-items: center; flex: none; }
  .track { flex: 1; background: #dadada; display: flex; flex-direction: column; justify-content: flex-end; }
  .thumb { height: 75px; background: #fff; border: 1px solid #ababab; }

  footer { flex: none; height: 22px; background: #f3f3f3; border-top: 1px solid #c6c6c6; display: flex; align-items: center; gap: 18px; padding-left: 8px; }
  .macro { margin-left: 3px; }
  .right { margin-left: auto; display: flex; align-items: center; align-self: stretch; padding-right: 18px; }
  .view { width: 38px; align-self: stretch; display: grid; place-items: center; }
  .view.active { background: #c5c5c5; }
  .zoom { display: flex; align-items: center; gap: 3px; margin: 0 13px 0 4px; }
  .pct { font-size: 13px; }
  .zoom input { appearance: none; width: 101px; height: 12px; background: linear-gradient(#a6a6a6, #a6a6a6) center / 100% 1px no-repeat; }
  .zoom input::-webkit-slider-thumb { appearance: none; width: 5px; height: 11px; background: #666; border: 0; border-radius: 0; }
</style>
